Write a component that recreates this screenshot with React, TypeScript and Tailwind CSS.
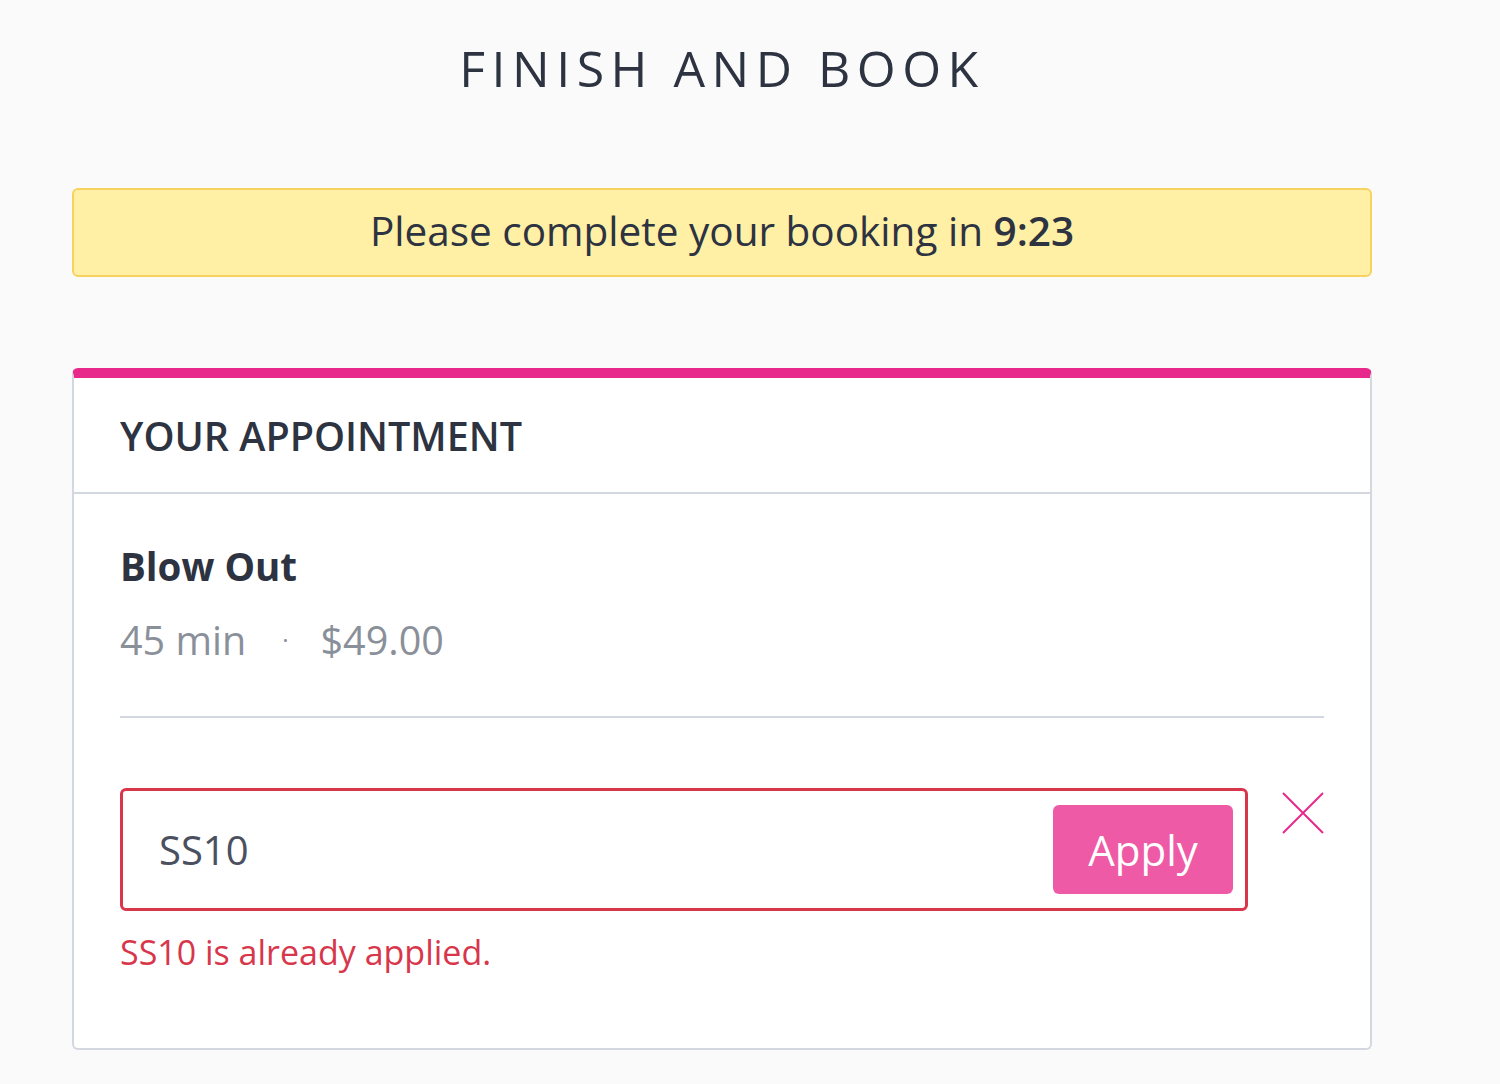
import React from 'react';

function CloseIcon() {
  return (
    <svg className="w-[42px] h-[42px]" viewBox="0 0 42 42" fill="none" stroke="#e8288a" strokeWidth={2}>
      <path d="M1 1L41 41M41 1L1 41" />
    </svg>
  );
}

export default function App() {
  return (
    <div
      className="min-h-screen w-[1500px] h-[1084px] bg-[#fafafb] overflow-hidden"
      style={{ fontFamily: '"Open Sans", "Liberation Sans", sans-serif' }}
    >
      <div className="w-[1300px] ml-[72px]">
        {/* Title */}
        <h1 className="pt-[37px] text-center text-[50px] leading-[62px] tracking-[0.13em] text-[#2d3340] font-normal">
          FINISH AND BOOK
        </h1>

        {/* Timer banner */}
        <div className="mt-[89px] h-[89px] flex items-center justify-center rounded-md border-2 border-[#f8d25e] bg-[#fff0a6] text-[40.5px] text-[#2d3340]">
          <span className="-mt-[2px]">
            Please complete your booking in <span className="font-semibold">9:23</span>
          </span>
        </div>

        {/* Appointment card */}
        <div className="mt-[91px] h-[682px] rounded-md border-2 border-t-[10px] border-[#d3d7e0] border-t-[#e8288a] bg-white">
          <div className="h-[116px] flex items-center px-[46px] border-b-2 border-[#d3d7e0]">
            <h2 className="text-[39.5px] font-semibold text-[#2d3340] pt-[4px]">YOUR APPOINTMENT</h2>
          </div>

          <div className="px-[46px]">
            <div className="pt-[44px] pb-[52px] border-b-2 border-[#d3d7e0]">
              <div className="text-[38.5px] leading-[56px] font-bold text-[#2d3340]">Blow Out</div>
              <div className="mt-[22px] text-[39.5px] leading-[48px] text-[#8a909a] flex items-center">
                <span>45 min</span>
                <span className="ml-[36px] mr-[32px] text-[24px]">·</span>
                <span>$49.00</span>
              </div>
            </div>

            <div className="pt-[70px] flex items-start">
              <div className="flex-1">
                <div className="h-[123px] flex items-center rounded-md border-[3px] border-[#d8364b] pl-[36px] pr-[12px]">
                  <span className="flex-1 text-[40px] text-[#4a5060]">SS10</span>
                  <button className="h-[89px] w-[180px] rounded-md bg-[#ee5aa5] text-white text-[42px]">
                    Apply
                  </button>
                </div>
                <div className="mt-[16px] text-[34px] text-[#d8364b]">SS10 is already applied.</div>
              </div>
              <div className="w-[76px] pt-[4px] flex justify-end">
                <CloseIcon />
              </div>
            </div>
          </div>
        </div>
      </div>
    </div>
  );
}
